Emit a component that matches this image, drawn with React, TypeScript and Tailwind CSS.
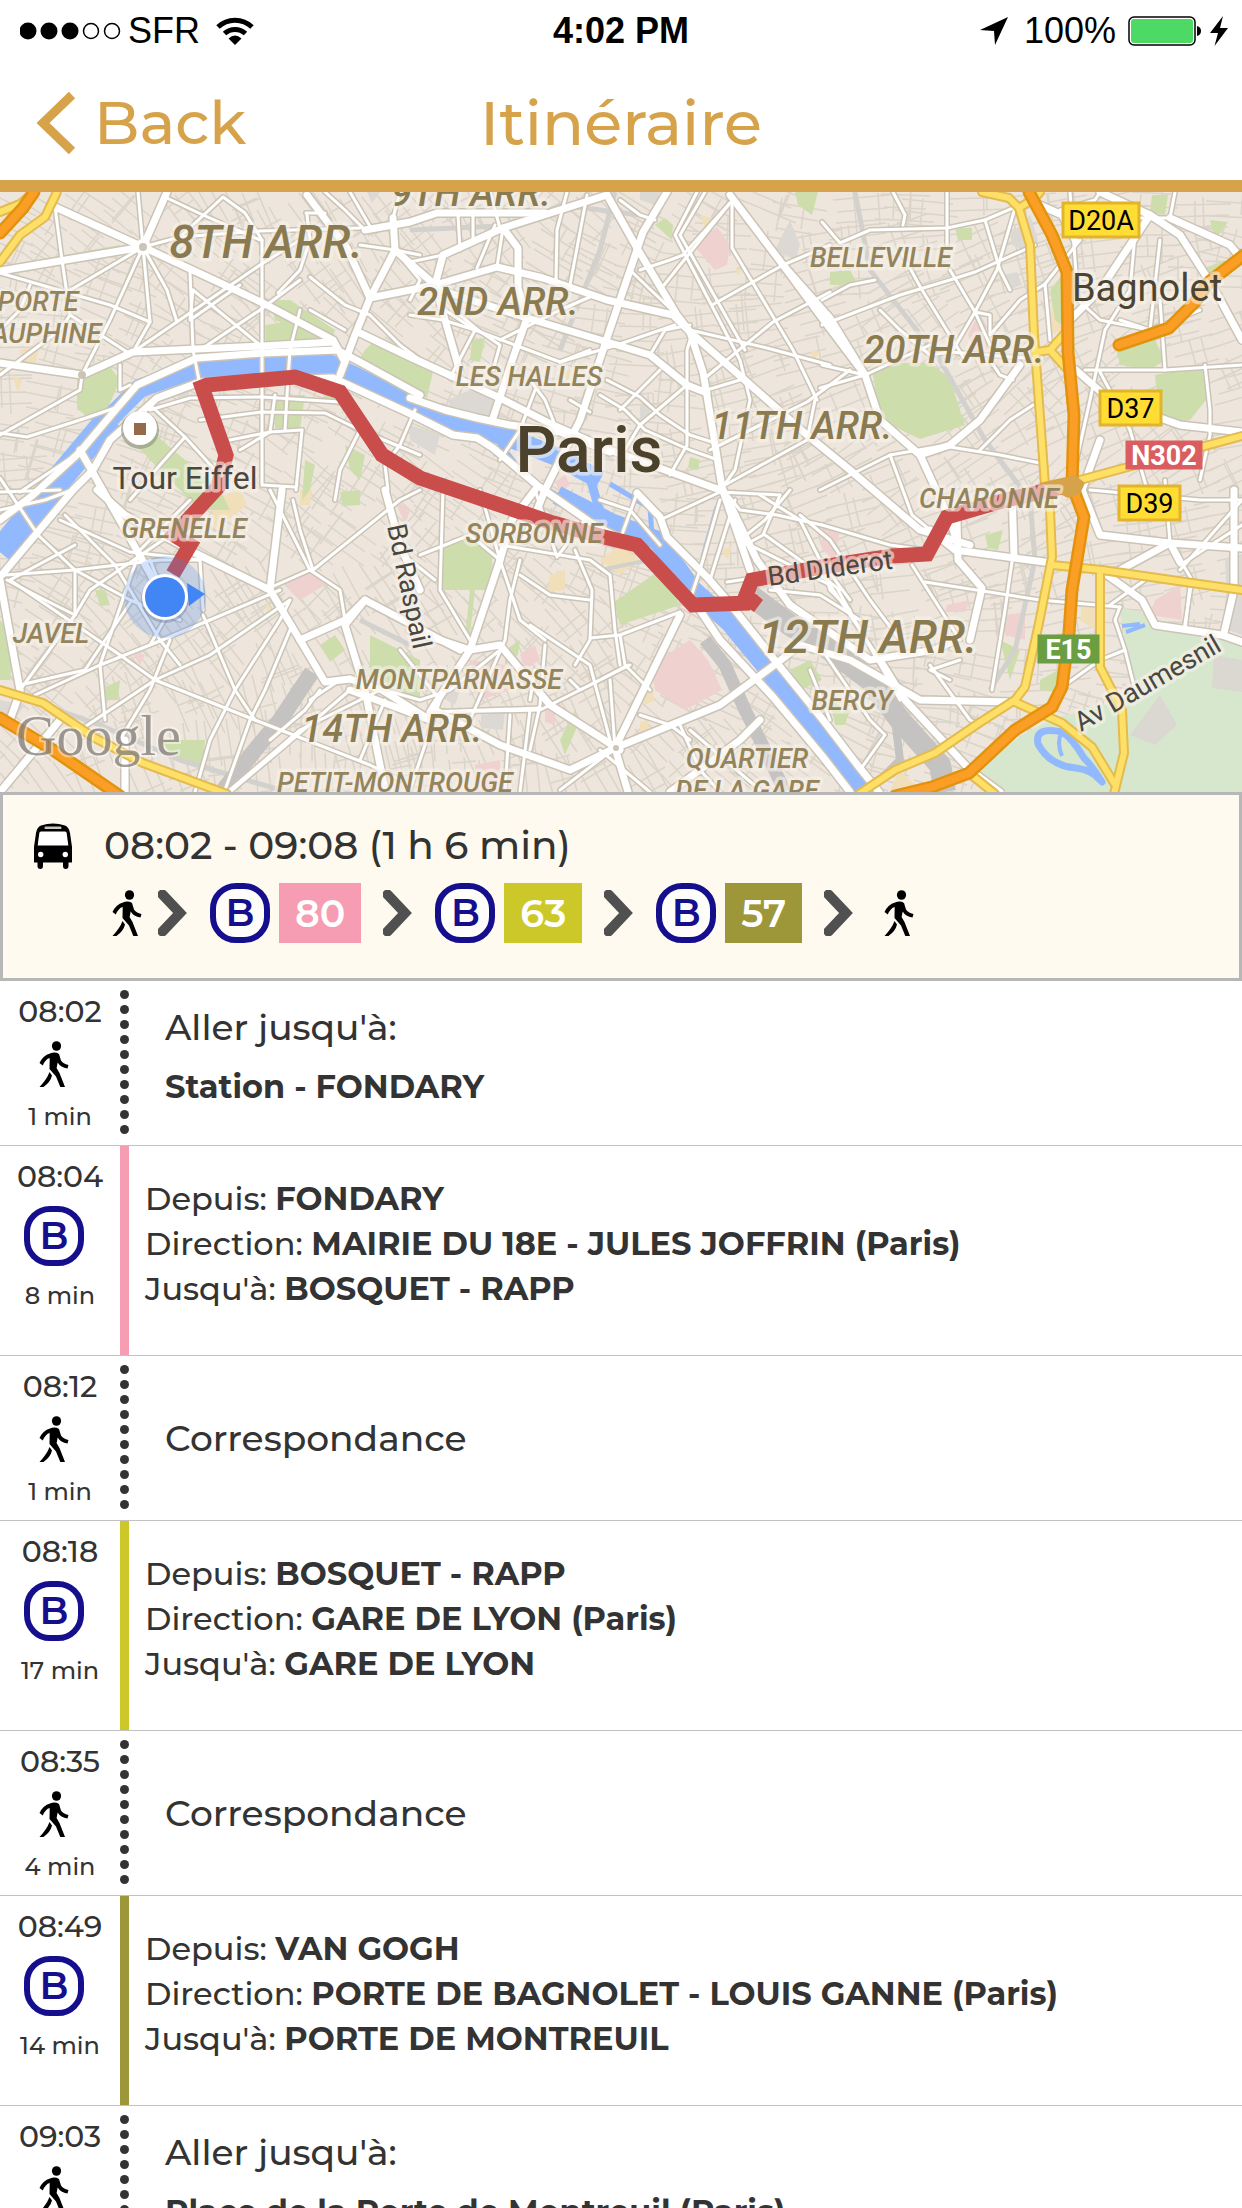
import React from "react";

const FONT = "font-['Montserrat','Inter','Liberation_Sans',sans-serif]";

type Stop = {
  time: string;
  duration: string;
  kind: "walk" | "bus";
  color?: string;
  lead?: string;
  place?: string;
  from?: string;
  direction?: string;
  to?: string;
};

const STOPS: Stop[] = [
  { kind: "walk", time: "08:02", duration: "1 min", lead: "Aller jusqu'à:", place: "Station - FONDARY" },
  { kind: "bus", time: "08:04", duration: "8 min", color: "bg-[#f69db3]", from: "FONDARY", direction: "MAIRIE DU 18E - JULES JOFFRIN (Paris)", to: "BOSQUET - RAPP" },
  { kind: "walk", time: "08:12", duration: "1 min", lead: "Correspondance" },
  { kind: "bus", time: "08:18", duration: "17 min", color: "bg-[#cdc829]", from: "BOSQUET - RAPP", direction: "GARE DE LYON (Paris)", to: "GARE DE LYON" },
  { kind: "walk", time: "08:35", duration: "4 min", lead: "Correspondance" },
  { kind: "bus", time: "08:49", duration: "14 min", color: "bg-[#9d9739]", from: "VAN GOGH", direction: "PORTE DE BAGNOLET - LOUIS GANNE (Paris)", to: "PORTE DE MONTREUIL" },
  { kind: "walk", time: "09:03", duration: "5 min", lead: "Aller jusqu'à:", place: "Place de la Porte de Montreuil (Paris)" },
];

const LEGS = [
  { line: "80", color: "bg-[#f69db3]" },
  { line: "63", color: "bg-[#cdc829]" },
  { line: "57", color: "bg-[#9d9739]" },
];

/* ---------- icons ---------- */

function WalkIcon() {
  return (
    <svg viewBox="0 0 30 46" className="h-[46px] w-[30px] shrink-0" aria-label="À pied">
      <ellipse cx="17.5" cy="5" rx="4.6" ry="4.8" fill="#000" />
      <path d="M11 12.5 Q16 10.500 20 13 L22 19.500 Q24 22.500 29.500 24 L28.500 27.500 Q21.500 26.500 18.700 21.500 L17.600 27 L20.500 32 L26 46 H21.300 L17 35.500 L10.500 28 L10.700 17 Q6.500 18 3.800 24.500 L.5 22 Q4 14.500 11 12.500Z" fill="#000" />
      <path d="M10.500 31 L13 34.500 Q11.500 41 4.500 46 H.5 Q8 38 10.500 31Z" fill="#000" />
    </svg>
  );
}

function BusIcon() {
  return (
    <svg viewBox="0 0 38 46" className="h-[46px] w-[38px] shrink-0" aria-label="Bus">
      <path d="M7 2.500 Q19 -1.500 31 2.500 Q35 4 36 10 L38 24 V39.500 H34.500 V43 Q34.500 46 31.800 46 Q29 46 29 43 V39.500 H9 V43 Q9 46 6.200 46 Q3.500 46 3.500 43 V39.500 H0 V24 L2 10 Q3 4 7 2.500Z" fill="#000" />
      <rect x="10.500" y="3.500" width="17" height="2.600" rx="1.200" fill="#c8c6bf" />
      <path d="M7 8.500 H31 Q32.500 8.500 32.700 10 L34.300 22.500 H3.700 L5.300 10 Q5.500 8.500 7 8.500Z" fill="#fff" />
      <circle cx="6.700" cy="31.500" r="2.700" fill="#fff" />
      <circle cx="31.300" cy="31.500" r="2.700" fill="#fff" />
    </svg>
  );
}

function BusBadge() {
  return (
    <span className="flex size-[60px] shrink-0 items-center justify-center rounded-[26px] border-[6px] border-[#150f8d] bg-white/60 text-[38px] leading-none font-semibold text-[#150f8d]">
      B
    </span>
  );
}

function Separator() {
  return (
    <svg viewBox="0 0 30 46" className="h-[46px] w-[30px] shrink-0" aria-hidden="true">
      <path d="M4.500 4.500 L22 23 L4.500 41.500" fill="none" stroke="#505050" strokeWidth="10" strokeLinecap="round" />
    </svg>
  );
}

/* ---------- map ---------- */

const MAJOR = [
  "55,207 143,247 263,303 333,340 345,362", "167,192 143,247", "143,247 0,271", "307,195 347,248 370,298",
  "393,218 395,250 370,298 355,335 340,375", "395,250 435,285 460,372", "0,363 82,375 133,352 197,349 263,346 333,342",
  "0,520 33,495 80,452 117,408 137,385 197,358 263,353 337,350 360,362 420,395", "360,333 410,357 500,398 553,425 610,450 665,470 720,490",
  "410,398 445,410 477,418 510,425 560,432 610,452",
  "0,577 73,490 93,470 110,440 157,398 200,382 333,378 413,415 453,435 477,438 493,448 537,485 597,527 640,548 693,600 720,640 773,697 823,757 850,792",
  "637,493 660,517 667,537 707,577 727,600 777,663 823,720 859,767 879,792", "365,230 410,222 437,213 545,213",
  "443,255 503,228 607,195", "443,255 435,285 410,290 370,298", "435,285 497,267 543,278 607,300 673,315 690,332",
  "503,228 518,248 518,288 527,318 513,358 493,418", "440,290 527,318 617,345 650,355 687,385 707,393",
  "607,195 637,248 677,315 690,332 747,382 807,435 850,470 920,530 970,545", "667,192 643,232 607,338 580,420 545,490 525,540",
  "690,332 703,372 713,432 722,488 750,570", "730,195 783,265 830,318 865,375 880,420 920,455 950,520 958,545",
  "865,375 822,318 783,265", "920,455 950,445 980,420 1020,365", "80,450 165,600",
  "97,490 125,515 195,553 270,590 300,640 325,682 350,679", "300,640 345,620 365,600 460,650", "385,490 400,545 420,590",
  "270,590 282,490", "365,600 345,625 365,690 385,790", "410,630 470,650 500,645 550,705 620,750", "500,560 470,650 430,712",
  "435,710 500,745 570,770 615,748 720,705 777,663 800,645 850,660 920,700 1015,702", "615,748 680,615", "615,748 628,792",
  "500,560 512,520 535,490", "350,690 430,720 435,710", "722,488 757,560 790,605", "790,605 870,660 935,650 955,640",
  "880,660 905,700 970,770 1000,792", "930,530 955,550 1052,563", "957,520 958,560 982,588 970,640", "1012,490 1014,555",
  "1100,440 1082,490 1100,535 1170,543 1242,548", "1100,570 1142,600 1155,625 1222,635 1242,642", "1150,215 1100,290 1070,320",
  "1100,192 1150,215 1180,235 1215,290 1242,340", "1170,218 1230,245 1242,260", "1234,490 1234,590 1224,633", "1040,205 1062,215 1075,240",
  "1076,370 1110,400 1180,425 1242,432", "1180,562 1170,543 1120,570", "0,792 60,720", "125,740 125,792", "20,692 10,720",
  "350,679 382,690 430,720", "0,580 20,690", "670,792 740,740 760,720",
];

const MEDIUM = [
  "138,192 143,247 110,320 82,375", "143,247 67,292", "143,247 150,322 133,352", "143,247 167,290 177,322", "143,247 180,237 260,231 360,228",
  "190,272 193,350 200,385", "262,240 262,485", "167,198 203,215 260,240", "180,237 223,197 245,213 262,240", "55,207 62,260 70,315 127,352",
  "133,352 260,265 300,240", "193,290 260,345", "193,290 190,320 240,285", "200,350 260,310 300,280", "0,273 110,305 150,322",
  "278,293 300,270 310,240 307,215", "300,310 290,350 288,378 285,430", "310,310 345,330", "310,277 345,305 370,315 400,345 420,360",
  "395,250 420,280 410,300", "0,435 80,390 82,375", "0,433 27,437 80,420 115,408", "120,365 120,390 130,385", "80,452 20,492", "150,405 185,437 215,470",
  "185,437 160,465 130,500", "150,410 190,398 262,397 340,402", "200,420 262,412 325,413 360,430 420,455", "230,440 270,432", "270,432 275,395",
  "302,430 296,490", "360,430 340,470 335,500", "415,410 400,445 385,465 388,490", "240,450 270,432 302,430", "263,485 295,487",
  "360,245 395,250 420,255", "306,213 325,213", "325,192 345,210 365,230", "350,192 371,228", "500,228 490,192", "458,215 460,250", "473,215 473,240",
  "495,225 477,268", "503,228 497,267", "567,192 557,230 556,280", "587,195 570,285", "410,262 443,255", "410,315 443,320 475,330 515,345 560,362 590,350",
  "460,315 478,330 500,345 493,370", "445,310 475,330 450,378", "500,340 560,310 590,297", "620,200 640,215 655,220", "632,272 677,315", "640,270 670,260 683,255 730,203",
  "697,192 675,235 740,360 750,400 735,470 722,488", "705,192 680,235 745,350", "732,203 732,248 793,350 817,400", "730,203 660,290", "712,305 783,265 830,245",
  "690,330 767,348 830,365", "705,378 773,322 830,292", "720,445 807,402 850,370", "725,485 743,475 807,440 815,400", "710,450 770,420",
  "560,362 617,345 675,325", "650,355 665,330 690,325", "687,385 640,425 625,450", "687,385 687,350 690,340", "687,385 687,445 670,475",
  "607,380 640,397 660,415 690,435 715,443", "600,395 625,410 645,430 690,450 718,460", "660,370 620,410", "740,380 700,392",
  "530,380 545,400 555,425", "535,390 520,430 500,460", "570,400 590,412", "585,520 557,557 535,490", "600,500 630,510 660,545",
  "637,493 620,540", "660,520 720,492 780,495", "780,495 763,535 745,545", "722,488 740,510 777,515 822,525", "822,525 890,545 925,550",
  "800,515 830,540 870,600 900,640", "740,540 830,585 880,660", "740,540 765,520 790,490", "765,535 800,560 840,590", "770,590 820,595 860,620",
  "760,495 800,520 820,560 850,600", "720,500 700,570 690,600", "735,500 710,580", "727,582 760,577", "893,192 905,215 903,225", "947,192 947,245",
  "822,222 840,243 870,230 947,228 985,220 1020,205", "985,220 1000,270 1010,290", "822,300 850,285 875,280", "822,325 900,295 950,280 975,272 1035,245",
  "900,250 922,290 965,360", "950,270 975,312 990,345", "1015,208 997,270 975,312 947,360", "975,312 990,315 990,335 1020,300 1045,284",
  "822,365 865,375 930,345", "820,388 865,375", "880,310 900,330 930,355 950,352", "950,352 1025,358", "990,360 1000,375 1013,380", "950,447 1000,455 1040,463",
  "980,450 1010,420 1033,405", "947,445 890,455 820,490", "890,455 912,515 930,530", "1045,284 1050,340", "1045,284 1060,265 1080,240",
  "1070,192 1078,300 1100,320 1150,330", "1135,235 1130,290 1105,330 1090,400 1070,490", "1160,240 1150,330", "1085,370 1165,370 1242,365",
  "1205,365 1210,410 1210,435 1200,480", "1165,370 1160,300", "1120,320 1150,330 1200,310", "1130,430 1150,500", "1100,372 1115,400 1130,430", "1165,480 1170,543 1192,580 1184,630",
  "1242,500 1180,570", "1242,525 1180,565", "1175,192 1170,218 1140,218", "1100,192 1095,200 1060,210", "1090,490 1200,500 1242,500",
  "0,510 45,500 72,490", "0,478 38,535 75,570 130,600 180,620", "5,575 75,570 160,560 200,560", "60,520 130,552 200,560 203,610", "65,515 115,565 160,640 180,665",
  "10,580 75,545", "75,570 75,615 20,690", "7,580 45,600 75,615", "75,615 90,590 170,535", "130,603 85,670 20,685", "10,580 120,655 155,680",
  "35,695 100,665 150,645 210,620 280,590", "155,680 210,655 290,600", "155,680 80,730", "155,680 255,720 370,765 400,780", "203,615 235,690 255,720",
  "235,690 210,740 195,792", "235,690 280,620 290,600", "190,500 140,550 100,665 105,720", "290,630 265,690 250,720 225,790", "150,645 170,610 150,560",
  "170,640 150,690 120,740", "270,490 310,570 340,590 345,620", "313,570 400,500 420,490", "310,570 265,590", "293,500 300,530 313,570",
  "400,650 440,700 410,790", "385,690 420,700 450,690 500,650", "380,690 300,730 230,790", "350,690 280,750 230,792", "385,700 360,760", "320,690 305,710 270,740",
  "340,680 310,700", "443,490 440,590 470,640", "420,555 470,535 500,560", "435,580 410,560", "480,490 500,560 520,620 545,640",
  "520,575 550,595 590,600", "500,545 590,560 610,575 615,630 620,665", "575,550 592,590 590,640 575,665", "530,625 590,665 610,740",
  "545,645 540,705 530,750", "520,560 510,600 505,640 470,720", "590,638 620,635 680,612", "620,635 625,665 650,690", "628,665 590,685 540,710 440,712",
  "430,712 540,708", "630,665 580,690 570,680", "535,670 530,700", "640,715 670,725 690,740", "680,725 700,770 720,792", "650,792 600,750", "510,715 505,792", "530,710 520,792",
  "690,730 760,790", "560,790 615,748 610,680", "838,590 900,700", "822,650 870,720 885,735 860,770", "930,665 970,720 980,725", "925,582 1040,600 1120,607",
  "912,565 960,640", "1013,555 1005,610 992,690", "1065,685 1100,660 1125,650", "1120,607 1115,620 1125,650 1135,690", "1110,605 1145,580", "1190,585 1185,630",
  "950,680 930,670 960,660", "830,720 810,670", "822,560 830,590 850,610", "400,192 393,218", "60,490 0,492", "30,285 20,310 0,330", "0,375 60,330 70,315",
];

const GREENS = [
  "873,375 890,363 930,363 950,378 960,410 965,425 920,439 880,420", "77,375 110,367 120,380 105,415 90,420 77,408", "133,440 150,430 220,490 230,510 200,510 150,460",
  "270,300 290,300 335,330 330,345 275,320", "265,325 300,320 330,345 300,350 266,352", "365,350 375,340 420,360 420,392 355,365", "420,362 433,372 427,398 415,392",
  "438,547 470,538 493,550 490,590 440,590", "614,602 660,570 680,605 620,625", "470,590 475,590 470,635 466,628", "0,620 15,635 10,680 0,680",
  "20,263 120,245 120,248 20,272", "370,635 420,660 420,700 370,675", "560,740 575,710 580,720 565,755", "275,395 305,395 300,430 275,428", "325,395 345,400 345,408 320,400",
  "1115,345 1150,330 1165,360 1150,370 1120,365", "1155,375 1205,365 1210,395 1190,420 1160,425", "1152,195 1168,195 1165,215 1150,212", "1210,220 1228,222 1215,240",
  "1050,290 1062,275 1062,325 1055,320", "1040,680 1058,670 1055,692 1040,690", "795,192 818,192 812,215 798,205", "655,225 665,218 673,225 672,240", "830,272 850,270 858,285 830,285",
  "160,740 205,740 203,765 175,760", "95,590 105,590 110,605 100,606", "340,492 360,490 360,505 342,506", "320,645 335,635 345,650 330,662", "790,670 810,660 822,680 800,690",
  "955,228 972,228 972,240 958,240", "1200,270 1225,260 1222,275 1205,280", "830,700 850,710 845,725 835,725", "472,340 485,338 480,362 470,360", "690,457 700,460 698,470 688,468",
  "305,460 315,465 310,490 302,500", "345,445 365,455 360,480 350,470", "790,640 800,650 790,655", "985,535 1003,530 998,550 988,548", "100,690 120,680 118,700 105,700",
  "505,650 520,640 518,655 505,665", "1020,650 1000,640 1010,680",
];
const PINKS = [
  "693,245 717,227 730,245 727,265 715,270", "650,665 690,640 708,660 722,690 685,710 655,690", "283,582 315,570 325,585 300,600", "470,660 505,665 510,690 480,700",
  "1155,600 1180,585 1182,620 1150,615", "1007,615 1025,612 1025,640 1005,635", "968,335 975,320 990,350 975,350", "947,605 970,600 965,612 945,612", "822,525 840,530 835,560 822,550",
  "475,765 500,760 500,792 475,792", "555,482 565,475 570,485 560,492", "520,655 535,645 540,660 525,670", "130,650 145,655 140,665", "395,500 410,510 405,525", "545,710 555,710 555,725 545,722",
];
const GREYS = [
  "448,400 470,390 500,400 490,418 450,408", "1010,235 1030,215 1038,240 1035,255 1012,245", "775,250 790,220 800,245 795,260", "640,192 660,192 655,205 640,200",
  "367,192 380,192 372,203", "640,405 650,400 650,415 640,420", "1225,560 1242,555 1242,635 1228,630",
  "0,700 25,705 10,725 0,720", "410,425 440,435 435,455 410,440", "481,715 505,712 503,730 481,728", "1003,275 1017,272 1022,285 1008,290", "176,390 190,390 188,400 178,400", "430,690 460,690 455,705",
];
const SANDS = [
  "210,500 240,490 247,505 215,530", "600,560 620,545 640,560 620,575", "550,575 565,570 565,590 548,592", "1052,300 1063,300 1062,330 1050,335", "1082,600 1100,610 1095,630 1080,620",
  "20,350 40,345 35,365 22,360", "300,490 312,490 310,505 300,505", "700,215 712,218 705,228", "722,550 732,545 728,560", "12,375 22,380 18,392", "640,690 650,685 655,700 645,705",
  "640,722 648,720 650,735 640,735", "265,600 272,610 268,615", "560,372 570,370 568,382", "890,790 900,770 920,790", "735,268 742,270 738,276", "810,350 820,352 814,360",
];

function seeded(seed: number) {
  let s = seed;
  return () => {
    s = (s * 1664525 + 1013904223) % 4294967296;
    return s / 4294967296;
  };
}

/* Faint side streets: small hatched neighbourhoods, each with its own orientation. */
function sideStreets() {
  const rnd = seeded(17);
  let d = "";
  for (let y = 196; y < 800; y += 38) {
    for (let x = 0; x < 1250; x += 42) {
      const cx = x + rnd() * 26;
      const cy = y + rnd() * 22;
      const a = 0.45 + Math.sin(x / 210) * 0.6 + Math.cos(y / 130) * 0.5 + (rnd() - 0.5) * 0.4;
      const ux = Math.cos(a);
      const uy = Math.sin(a);
      for (let k = -1; k <= 1; k++) {
        const o = k * (10 + rnd() * 5);
        const l = 18 + rnd() * 14;
        const px = cx - uy * o;
        const py = cy + ux * o;
        d += `M${(px - ux * l).toFixed(0)} ${(py - uy * l).toFixed(0)}L${(px + ux * l).toFixed(0)} ${(py + uy * l).toFixed(0)}`;
      }
      for (let k = 0; k < 2; k++) {
        const o = (rnd() - 0.5) * 40;
        const l = 10 + rnd() * 12;
        const px = cx + ux * o;
        const py = cy + uy * o;
        d += `M${(px + uy * l).toFixed(0)} ${(py - ux * l).toFixed(0)}L${(px - uy * l).toFixed(0)} ${(py + ux * l).toFixed(0)}`;
      }
    }
  }
  return d;
}
const SIDE_STREETS = sideStreets();

const YELLOW = [
  "57,192 45,217 20,235 0,262", "0,212 20,204 34,192", "0,690 43,703 93,737 143,763 227,794",
  "982,192 1009,198 1019,208 1030,245 1034,335 1045,485 1050,510 1052,557 1039,623 1025,687 1015,700 979,723 935,753 895,770 859,794",
  "1019,208 1035,198 1040,192", "1052,565 1102,570 1192,583 1242,590", "1100,573 1100,667 1122,710 1124,753 1114,794", "1015,702 1062,723 1092,747 1114,783",
  "1080,480 1242,436", "969,773 995,794", "1036,352 1050,350 1066,332", "1050,350 1066,368",
];
const ORANGE = [
  "34,192 23,208 0,233", "0,718 53,750 120,796",
  "1029,192 1052,235 1067,272 1068,352 1074,415 1072,485 1084,517 1072,590 1069,633 1062,687 1052,707 1015,730 969,773 932,787 895,796",
  "1119,345 1169,328 1195,302 1209,282 1244,255",
];
const WATER = "0,552 50,490 110,418 140,388 193,370 263,367 330,364 413,405 453,420 510,438 560,458 600,480";
const WATER_SOUTH = "497,440 527,478 557,495 610,520 657,540 693,590 730,623 763,663 820,737 862,792";
const ROUTE = "173,574 190,545 174,535 218,487 226,455 202,387 207,385 295,377 340,392 382,455 420,478 553,523 600,536 637,545 693,605 750,603 743,603 752,580 822,567 892,556 927,554 947,517 1002,501 1062,487";

type Label = { t: string; x: number; y: number; s: "arr" | "big" | "area" };
const LABELS: Label[] = [
  { t: "8TH ARR.", x: 266, y: 258, s: "big" },
  { t: "9TH ARR.", x: 471, y: 206, s: "arr" },
  { t: "2ND ARR.", x: 498, y: 315, s: "arr" },
  { t: "11TH ARR.", x: 802, y: 439, s: "arr" },
  { t: "20TH ARR.", x: 954, y: 363, s: "arr" },
  { t: "14TH ARR.", x: 392, y: 742, s: "arr" },
  { t: "12TH ARR.", x: 868, y: 653, s: "big" },
  { t: "PORTE", x: 38, y: 311, s: "area" },
  { t: "DAUPHINE", x: 38, y: 343, s: "area" },
  { t: "LES HALLES", x: 529, y: 386, s: "area" },
  { t: "BELLEVILLE", x: 881, y: 267, s: "area" },
  { t: "GRENELLE", x: 184, y: 538, s: "area" },
  { t: "SORBONNE", x: 534, y: 543, s: "area" },
  { t: "CHARONNE", x: 989, y: 508, s: "area" },
  { t: "JAVEL", x: 51, y: 643, s: "area" },
  { t: "MONTPARNASSE", x: 459, y: 689, s: "area" },
  { t: "PETIT-MONTROUGE", x: 395, y: 792, s: "area" },
  { t: "QUARTIER", x: 747, y: 768, s: "area" },
  { t: "DE LA GARE", x: 747, y: 800, s: "area" },
  { t: "BERCY", x: 852, y: 710, s: "area" },
];
const LABEL_CLASS = {
  big: "fill-[#8a7a50] text-[46px] font-medium italic",
  arr: "fill-[#8a7a50] text-[38px] font-medium italic",
  area: "fill-[#94845c] text-[27px] font-medium italic",
};

const SHIELDS = [
  { t: "D20A", x: 1062, y: 202, w: 78, h: 36, fill: "#ffdd33", edge: "#e2b42c", ink: "#000" },
  { t: "D37", x: 1099, y: 390, w: 63, h: 36, fill: "#ffdd33", edge: "#e2b42c", ink: "#000" },
  { t: "D39", x: 1118, y: 485, w: 63, h: 36, fill: "#ffdd33", edge: "#e2b42c", ink: "#000" },
  { t: "N302", x: 1126, y: 441, w: 76, h: 28, fill: "#da5d60", edge: "#da5d60", ink: "#fff" },
  { t: "E15", x: 1038, y: 635, w: 61, h: 28, fill: "#6a9e41", edge: "#6a9e41", ink: "#fff" },
];

function Lines({ items, stroke, width }: { items: string[]; stroke: string; width: number }) {
  return (
    <g fill="none" stroke={stroke} strokeWidth={width} strokeLinejoin="round" strokeLinecap="round">
      {items.map((p, i) => <polyline key={i} points={p} />)}
    </g>
  );
}

function Areas({ items, fill }: { items: string[]; fill: string }) {
  return <g fill={fill}>{items.map((p, i) => <polygon key={i} points={p} />)}</g>;
}

function RouteMap() {
  return (
    <svg viewBox="0 192 1242 600" preserveAspectRatio="xMidYMid slice" role="img" aria-label="Carte de l'itinéraire" className="block h-[600px] w-full shrink-0 bg-[#eee6dd] font-[Roboto,sans-serif]">
      <path d={SIDE_STREETS} fill="none" stroke="#dad4c9" strokeWidth="1.500" />
      <Areas items={GREYS} fill="#dcd9d4" />
      <Areas items={SANDS} fill="#f0dfb9" />
      <Areas items={PINKS} fill="#efd2cf" />
      <Areas items={GREENS} fill="#cddeac" />
      <polygon points="1119,607 1142,613 1155,627 1222,633 1242,647 1242,792 1000,792 969,775 1025,733 1055,718 1122,700 1135,690 1125,640" fill="#d6e7cd" />
      <polygon points="1130,735 1160,695 1177,725 1155,745" fill="#dbd7d1" />
      <polygon points="1214,655 1242,660 1242,692 1212,688" fill="#dbd7d1" />
      <g fill="none" stroke="#d3d1ce" strokeLinejoin="round">
        <polyline points="855,192 870,270 940,360 985,440 1030,500 1035,560 1015,650 990,690" strokeWidth="5" />
        <polyline points="615,192 600,250 560,350" strokeWidth="5" />
        <polyline points="410,230 520,225 560,205 640,215" strokeWidth="5" />
        <polyline points="30,700 100,725 180,760 280,790" strokeWidth="5" />
        <polyline points="600,570 650,560 690,600 720,640" strokeWidth="4" />
        <polyline points="360,620 410,645" strokeWidth="5" />
      </g>
      <g fill="none" stroke="#c5c3c1" strokeLinejoin="round">
        <polyline points="312,672 280,720 255,750 222,792" strokeWidth="16" />
        <polyline points="705,640 725,665 745,710 770,760 785,792" strokeWidth="13" />
        <polyline points="750,595 790,625 830,650 870,680 900,720 940,765 945,792" strokeWidth="22" />
        <polyline points="895,720 900,760 880,780" strokeWidth="8" />
      </g>
      <g fill="none" stroke="#92b9fd" strokeLinejoin="round">
        <polyline points={WATER} strokeWidth="19" />
        <polyline points="0,552 50,490 110,418" strokeWidth="26" />
        <polyline points={WATER_SOUTH} strokeWidth="5" />
        <polyline points="557,495 610,522 657,540 693,590 730,623 763,663 820,737 862,792" strokeWidth="19" />
        <polyline points="590,478 600,512" strokeWidth="9" />
        <polyline points="610,484 650,508 652,535" strokeWidth="5" />
        <polyline points="717,507 703,557" strokeWidth="5" />
        <path d="M1062 732 Q1034 726 1038 744 Q1050 766 1076 768 Q1092 770 1100 780 M1062 732 Q1072 738 1084 758 Q1092 766 1102 782" strokeWidth="7" strokeLinecap="round" />
        <path d="M1062 732 Q1056 742 1062 756 M1122 626 L1140 624 M1126 632 L1145 625" strokeWidth="4" />
      </g>
      <Lines items={MEDIUM} stroke="#cbc4b6" width={6} />
      <Lines items={MAJOR} stroke="#cbc4b6" width={10} />
      <Lines items={MEDIUM} stroke="#ffffff" width={3} />
      <Lines items={MAJOR} stroke="#ffffff" width={7} />
      <circle cx="143" cy="247" r="8" fill="#fff" /><circle cx="143" cy="247" r="4" fill="#cbc4b6" />
      <circle cx="82" cy="375" r="4" fill="#cbc4b6" />
      <circle cx="616" cy="748" r="3" fill="#cbc4b6" />
      <Lines items={YELLOW} stroke="#e3bb50" width={10} />
      <Lines items={YELLOW} stroke="#ffe067" width={6} />
      <Lines items={ORANGE} stroke="#e2930e" width={13} />
      <Lines items={ORANGE} stroke="#fb9e26" width={8} />

      <polyline points={ROUTE} fill="none" stroke="#c94d4a" strokeWidth="15" strokeLinejoin="miter" strokeMiterlimit="3" />
      <polygon points="750,594 756,594 763,600 754,612 748,608" fill="#c94d4a" />
      <polygon points="1039,483 1075,475 1085,483 1080,494 1068,498 1060,494" fill="#d6a24a" />

      <circle cx="140" cy="430" r="19" fill="#8a8f78" opacity=".6" />
      <circle cx="140" cy="428" r="17" fill="#fff" />
      <rect x="134" y="423" width="12" height="12" fill="#95694a" />

      <circle cx="165" cy="597" r="41" fill="#4285f4" opacity=".24" />
      <path d="M187 583 L205 594 L189 606Z" fill="#4285f4" />
      <circle cx="165" cy="599" r="24" fill="#5b6f94" opacity=".35" />
      <circle cx="165" cy="597" r="23" fill="#fff" />
      <circle cx="165" cy="597" r="20" fill="#4285f4" />

      <g stroke="#f7f2ea" strokeOpacity=".6" strokeWidth="7" strokeLinejoin="round" paintOrder="stroke">
        {LABELS.map((l) => (
          <text key={l.t} x={l.x} y={l.y} textAnchor="middle" className={LABEL_CLASS[l.s]}>{l.t}</text>
        ))}
        <text x="589" y="472" textAnchor="middle" className="fill-[#4c412a] text-[64px] font-medium">Paris</text>
        <text x="185" y="489" textAnchor="middle" className="fill-[#4a4640] text-[32px]">Tour Eiffel</text>
        <text x="1147" y="301" textAnchor="middle" className="fill-[#4c4432] text-[38px]">Bagnolet</text>
        <g className="fill-[#4a4640] text-[27px]">
          <text transform="translate(387 526) rotate(78)">Bd Raspail</text>
          <text transform="translate(769 586) rotate(-8)">Bd Diderot</text>
          <text transform="translate(1081 732) rotate(-30)">Av Daumesnil</text>
        </g>
      </g>
      {SHIELDS.map((s) => (
        <g key={s.t}>
          <rect x={s.x + 1} y={s.y + 1} width={s.w - 2} height={s.h - 2} fill={s.fill} stroke={s.edge} strokeWidth="3" />
          <text x={s.x + s.w / 2} y={s.y + s.h / 2 + 10} textAnchor="middle" fill={s.ink} className={s.ink === "#fff" ? "text-[27px] font-bold" : "text-[27px]"}>{s.t}</text>
        </g>
      ))}
      <text x="16" y="755" fill="#77706a" fillOpacity=".7" stroke="#fff" strokeOpacity=".45" strokeWidth="4" paintOrder="stroke" className="font-['Liberation_Serif',serif] text-[56px]">Google</text>
    </svg>
  );
}

/* ---------- page ---------- */

function StatusBar() {
  return (
    <div className="grid h-[62px] shrink-0 grid-cols-[1fr_auto_1fr] items-center px-3 font-['Liberation_Sans',Arial,sans-serif] text-[36px] leading-none text-black">
      <div className="flex items-center pl-2">
        <svg viewBox="0 0 104 20" className="h-5 w-[104px]" aria-label="Signal">
          <circle cx="8" cy="10" r="8.500" /><circle cx="29" cy="10" r="8.500" /><circle cx="50" cy="10" r="8.500" />
          <circle cx="71" cy="10" r="7.500" fill="none" stroke="#000" strokeWidth="1.500" /><circle cx="92" cy="10" r="7.500" fill="none" stroke="#000" strokeWidth="1.500" />
        </svg>
        <span className="ml-1">SFR</span>
        <svg viewBox="0 0 38 28" className="ml-4 h-7 w-[38px]" aria-label="Wi-Fi">
          <path d="M2 10 A24.500 24.500 0 0 1 36 10" fill="none" stroke="#000" strokeWidth="5" />
          <path d="M8.500 16.500 A15.500 15.500 0 0 1 29.500 16.500" fill="none" stroke="#000" strokeWidth="5" />
          <path d="M19 28 L12.500 21.500 Q19 15.500 25.500 21.500Z" />
        </svg>
      </div>
      <span className="font-bold">4:02 PM</span>
      <div className="flex items-center justify-end">
        <svg viewBox="0 0 28 28" className="mr-4 size-7" aria-label="Localisation"><path d="M28 0 L15 28 L14 14 L0 13Z" /></svg>
        <span>100%</span>
        <svg viewBox="0 0 74 30" className="ml-3 h-[30px] w-[74px]" aria-label="Batterie">
          <rect x="1" y="1" width="66" height="28" rx="5" fill="#fff" stroke="#000" strokeWidth="1.500" />
          <rect x="3" y="3" width="62" height="24" rx="3" fill="#4cd964" />
          <path d="M69 10 Q73 11 73 15 Q73 19 69 20Z" />
        </svg>
        <svg viewBox="0 0 18 30" className="mr-[2px] ml-2 h-[30px] w-[18px]" aria-label="En charge"><path d="M13 0 L0 17 H8 L4.500 30 L18 12 H10Z" /></svg>
      </div>
    </div>
  );
}

function Row({ stop }: { stop: Stop }) {
  const bus = stop.kind === "bus";
  return (
    <li className={bus ? "flex h-[210px] shrink-0 border-b border-[#c2c2c2]" : "flex h-[165px] shrink-0 border-b border-[#c2c2c2]"}>
      <div className="flex w-[120px] shrink-0 flex-col items-center pt-[11px]">
        <time className="text-[30px] leading-10 font-medium">{stop.time}</time>
        <div className="mt-[9px] mr-3 flex justify-center">{bus ? <BusBadge /> : <WalkIcon />}</div>
        <span className="mt-[14px] text-[24px] leading-8 font-medium">{stop.duration}</span>
      </div>
      {bus ? (
        <div className={`w-[9px] shrink-0 ${stop.color}`} />
      ) : (
        <div className="flex w-[9px] shrink-0 flex-col gap-[6px] pt-[9px]">
          {Array.from({ length: 10 }, (_, i) => <span key={i} className="size-[9px] shrink-0 rounded-full bg-[#333]" />)}
        </div>
      )}
      {bus ? (
        <div className="min-w-0 flex-1 pt-[30px] pl-4 text-[32px] leading-[45px] font-medium">
          <p>Depuis: <b>{stop.from}</b></p>
          <p>Direction: <b>{stop.direction}</b></p>
          <p>Jusqu'à: <b>{stop.to}</b></p>
        </div>
      ) : (
        <div className={stop.place ? "flex min-w-0 flex-1 flex-col justify-center gap-4 pb-3 pl-9" : "flex min-w-0 flex-1 flex-col justify-center pl-9"}>
          <p className="text-[36px] leading-[44px] font-medium">{stop.lead}</p>
          {stop.place && <p className="text-[32px] leading-[44px] font-bold">{stop.place}</p>}
        </div>
      )}
    </li>
  );
}

export default function App() {
  return (
    <div className={`flex h-screen flex-col overflow-hidden bg-white text-[#333] ${FONT}`}>
      <StatusBar />
      <header className="grid h-[130px] shrink-0 grid-cols-[1fr_auto_1fr] items-center border-b-[12px] border-[#d6a34b] pt-1 text-[60px] leading-none font-medium text-[#d6a34b]">
        <button type="button" className="flex items-center gap-[18px] justify-self-start pl-9">
          <svg viewBox="0 0 40 64" className="h-16 w-10" aria-hidden="true">
            <path d="M36 4 L7 32 L36 60" fill="none" stroke="currentColor" strokeWidth="9" />
          </svg>
          Back
        </button>
        <h1 className="text-[62px]">Itinéraire</h1>
      </header>
      <RouteMap />
      <section className="flex h-[189px] shrink-0 gap-8 border-[3px] border-[#b7b7b7] bg-[#fffaef] pt-[22px] pl-[31px]">
        <div className="pt-[6px]"><BusIcon /></div>
        <div>
          <h2 className="text-[39px] leading-[56px] font-medium">08:02 - 09:08 (1 h 6 min)</h2>
          <div className="mt-[10px] flex items-center pl-2">
            <WalkIcon />
            <div className="ml-4 flex"><Separator /></div>
            {LEGS.map((leg) => (
              <React.Fragment key={leg.line}>
                <div className="ml-[22px] flex"><BusBadge /></div>
                <span className={`ml-[9px] flex h-[60px] items-center px-4 text-[38px] font-semibold text-white ${leg.color}`}>{leg.line}</span>
                <div className="ml-[22px] flex"><Separator /></div>
              </React.Fragment>
            ))}
            <div className="ml-[30px] flex"><WalkIcon /></div>
          </div>
        </div>
      </section>
      <ol className="flex min-h-0 flex-1 flex-col overflow-y-auto [scrollbar-width:none]">
        {STOPS.map((stop) => <Row key={stop.time} stop={stop} />)}
      </ol>
    </div>
  );
}
